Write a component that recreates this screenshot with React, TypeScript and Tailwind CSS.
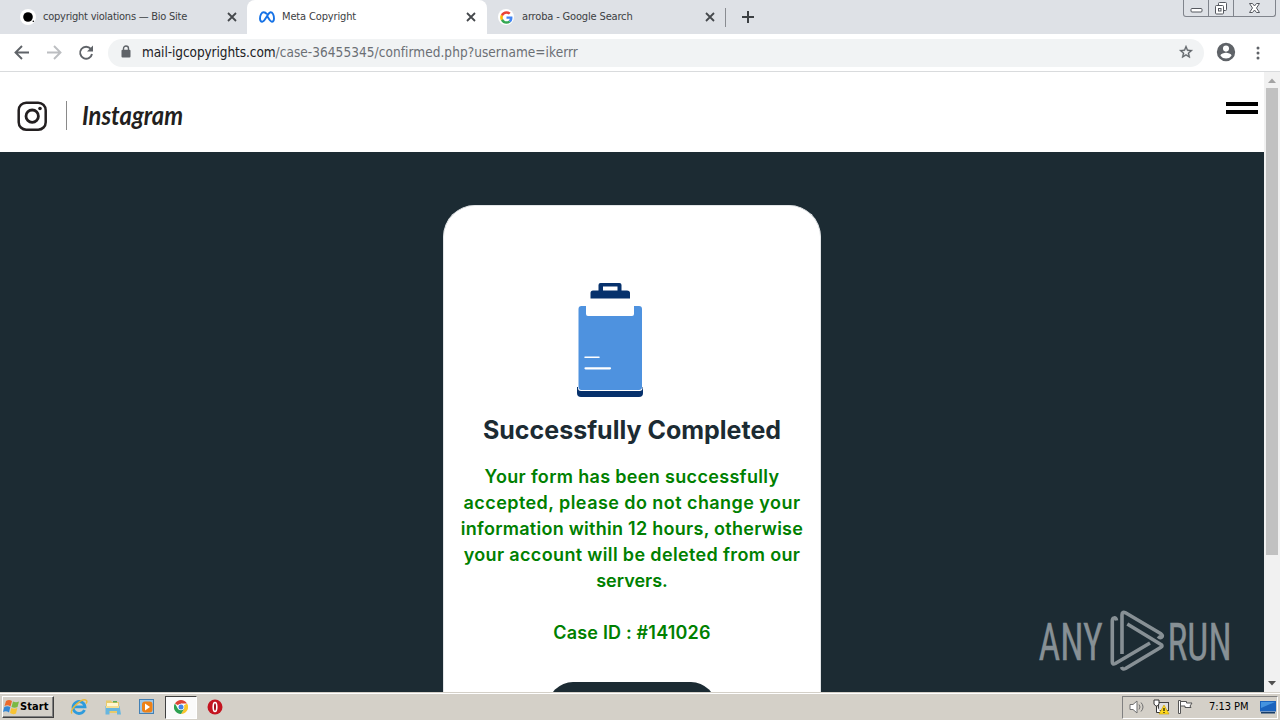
import React from 'react';

const UI = "font-['DejaVu_Sans_Condensed','DejaVu_Sans',sans-serif] [font-stretch:condensed]";

function Close() {
  return (
    <svg width="10" height="10" viewBox="0 0 10 10" className="shrink-0" fill="none" stroke="#45484c" strokeWidth="1.8">
      <path d="M1 1l8 8M9 1l-8 8" />
    </svg>
  );
}

function GoogleG() {
  return (
    <span className="flex h-4 w-4 shrink-0 items-center justify-center rounded-full bg-white">
      <svg width="13" height="13" viewBox="0 0 48 48">
        <path fill="#4285f4" d="M46 24.5c0-1.6-.1-3-.4-4.5H24v9h12.400c-.6 3-2.300 5.400-4.700 7l7.500 5.800C43.600 37.700 46 31.600 46 24.500z" />
        <path fill="#34a853" d="M24 47c6.200 0 11.400-2 15.200-5.500L31.700 36c-2.100 1.400-4.700 2.200-7.700 2.200-6 0-11-4-12.900-9.500l-7.700 6C7.200 42 15 47 24 47z" />
        <path fill="#fbbc05" d="M11.100 28.700a14 14 0 010-9.400l-7.700-6a23 23 0 000 21.400z" />
        <path fill="#ea4335" d="M24 9.800c3.400 0 6.400 1.200 8.800 3.400l6.600-6.600C35.400 3 30.200 1 24 1 15 1 7.200 6 3.400 13.300l7.700 6C13 13.800 18 9.800 24 9.800z" />
      </svg>
    </span>
  );
}

function TabStrip() {
  return (
    <div className="flex h-[34px] shrink-0 bg-[#dee1e6] text-[11px] text-[#3c4043]">
      <div className="flex h-[34px] w-[247px] items-center pl-5 pr-[10px]">
        <svg width="16" height="16" viewBox="0 0 16 16" className="shrink-0">
          <circle cx="8" cy="8" r="8" fill="#fff" />
          <circle cx="8" cy="8" r="4.800" />
          <circle cx="13.300" cy="12.200" r=".8" />
        </svg>
        <span className="ml-[7px] flex-1 whitespace-nowrap tracking-[-0.24px]">copyright violations — Bio Site</span>
        <Close />
      </div>
      <div className="flex h-[34px] w-[240px] items-center rounded-t-lg bg-white pl-3 pr-[11px]">
        <svg width="16" height="12" viewBox="0 0 16 12" className="shrink-0" fill="none" stroke="#1672e6" strokeWidth="1.900">
          <path d="M8 3.300C6.800 1.700 5.900 1.200 4.700 1.200 2.600 1.200 1 4.200 1 7.500c0 2 .8 3.200 2.200 3.200C4.800 10.700 5.700 9 8 5.200c1.700-2.800 2.300-4 3.600-4C13.600 1.200 15 4.300 15 7.500c0 2.100-.8 3.200-2.100 3.200-1.600 0-2.300-1.500-4.900-5.900" />
        </svg>
        <span className="ml-[7px] flex-1 whitespace-nowrap tracking-[-0.14px]">Meta Copyright</span>
        <Close />
      </div>
      <div className="flex h-[34px] w-[238px] items-center pl-[11px] pr-[10px]">
        <GoogleG />
        <span className="ml-[8px] flex-1 whitespace-nowrap tracking-[-0.16px]">arroba - Google Search</span>
        <Close />
      </div>
      <div className="mt-2 h-[19px] w-px bg-[#898c91]" />
      <svg width="14" height="14" viewBox="0 0 14 14" className="ml-[15px] mt-[10px]" stroke="#3c4043" strokeWidth="2">
        <path d="M7 1v12M1 7h12" />
      </svg>
      <div className="flex-1" />
      <div className="mr-1 flex h-[17px] w-[93px] rounded-b-[3px] border border-t-0 border-[#80848c]">
        <div className="flex w-[25px] justify-center border-r border-[#80848c]">
          <svg width="13" height="16" fill="#fff" stroke="#55585f"><rect x="1" y="8.500" width="11" height="3.500" rx="1" /></svg>
        </div>
        <div className="flex w-[25px] justify-center border-r border-[#80848c]">
          <svg width="14" height="16" fill="#fff" stroke="#55585f">
            <rect x="4.500" y="2.500" width="8" height="8" rx="1" />
            <rect x="1.500" y="5.500" width="8" height="8.500" rx="1" />
            <rect x="4.500" y="8.500" width="2.500" height="2.500" />
          </svg>
        </div>
        <div className="flex flex-1 justify-center">
          <svg width="13" height="16" fill="#fff" stroke="#55585f">
            <path d="M1.500 3.500h3l2 2.500 2-2.500h3L8.500 8l3 4.500h-3l-2-2.500-2 2.500h-3l3-4.500z" />
          </svg>
        </div>
      </div>
    </div>
  );
}

function Toolbar() {
  return (
    <div className="flex h-[38px] shrink-0 items-center border-b border-[#d9dbdd] bg-white pr-[14px]">
      <svg width="108" height="36" viewBox="0 0 108 36" fill="none" strokeWidth="1.900" className="shrink-0">
        <path d="M29 17.500H16M22 11L15.500 17.500l6.500 6.500" stroke="#5f6368" />
        <path d="M47 17.500h13M54 11l6.500 6.500-6.500 6.500" stroke="#bcbec1" />
        <path d="M90.800 13.900A6 6 0 1092 19" stroke="#5f6368" />
        <path d="M93 10.500v6h-6z" fill="#5f6368" />
      </svg>
      <div className="flex h-7 w-[1096px] shrink-0 items-center rounded-full bg-[#f1f3f4] pl-[13px] pr-[10px]">
        <svg width="10" height="13" viewBox="0 0 10 13" className="mb-[2px] shrink-0">
          <path d="M2.500 6V3.500a2.500 2.500 0 015 0V6" fill="none" stroke="#5f6368" strokeWidth="1.400" />
          <rect x=".5" y="4.800" width="9" height="7.700" rx="1" fill="#5f6368" />
        </svg>
        <span className="ml-[11px] flex-1 whitespace-nowrap text-[13.5px] tracking-[0.06px] text-[#6b6f74]">
          <span className="tracking-[-0.08px] text-[#202124]">mail-igcopyrights.com</span>/case-36455345/confirmed.php?username=ikerrr
        </span>
        <svg width="16" height="16" viewBox="0 0 24 24" fill="#5f6368" stroke="#5f6368" strokeWidth=".5" className="mb-px">
          <path d="M22 9.240l-7.190-.62L12 2 9.190 8.630 2 9.240l5.460 4.730L5.820 21 12 17.270 18.180 21l-1.630-7.030L22 9.240zM12 15.400l-3.760 2.270 1-4.280-3.320-2.880 4.380-.38L12 6.100l1.710 4.040 4.380.38-3.320 2.880 1 4.280L12 15.400z" />
        </svg>
      </div>
      <svg width="22" height="22" viewBox="0 0 24 24" fill="#5f6368" className="mb-[2px] ml-[11px] shrink-0">
        <path d="M12 2a10 10 0 100 20 10 10 0 000-20zm0 3a3.300 3.300 0 110 6.600A3.300 3.300 0 0112 5zm0 14.200a7.200 7.200 0 01-6-3.200c0-2 4-3.100 6-3.100s6 1.100 6 3.100a7.200 7.200 0 01-6 3.200z" />
      </svg>
      <svg width="4" height="16" viewBox="0 0 4 16" fill="#5f6368" className="ml-[19px] shrink-0">
        <circle cx="2" cy="3" r="1.500" /><circle cx="2" cy="8" r="1.500" /><circle cx="2" cy="13" r="1.500" />
      </svg>
    </div>
  );
}

function SiteHeader() {
  return (
    <div className="flex h-20 shrink-0 justify-between bg-white">
      <svg width="200" height="80" viewBox="0 0 200 80">
        <g fill="none" stroke="#231f20">
          <rect x="18.700" y="30.700" width="27" height="27" rx="7.500" strokeWidth="2.500" />
          <circle cx="32.200" cy="44.200" r="6.200" strokeWidth="2.800" />
          <path d="M66.500 29v29" stroke="#8a8a8a" strokeWidth="1" />
        </g>
        <circle cx="40" cy="36.500" r="1.800" fill="#231f20" />
        <text x="82" y="52.500" fontSize="26" fontWeight="700" fontStyle="italic" fill="#231f20" textLength="101" lengthAdjust="spacingAndGlyphs" fontFamily="Lato, sans-serif">Instagram</text>
      </svg>
      <div className="mr-[6px] mt-[30px] flex w-8 flex-col gap-1">
        <div className="h-1 bg-black" />
        <div className="h-1 bg-black" />
      </div>
    </div>
  );
}

function Clipboard() {
  return (
    <svg width="68" height="116" viewBox="0 0 68 116" className="ml-[133px] shrink-0">
      <path d="M13.500 16.500V11q0-2.500 2.500-2.500H21.500V3q0-2 2-2h19q2 0 2 2v5.500h5.500Q53 8.500 53 11v5.500z" fill="#06316c" />
      <rect x="26" y="4.500" width="14.500" height="4" fill="#fff" />
      <path d="M0 105h66v6q0 4-4 4H4q-4 0-4-4z" fill="#06316c" />
      <path d="M1 24h64.500v82q0 3-3 3H4q-3 0-3-3z" fill="#fff" />
      <path d="M1.500 27q0-3 3-3H9v8q0 2 2 2h44q2 0 2-2v-8h5q3 0 3 3v78q0 3-3 3H4.500q-3 0-3-3z" fill="#4e92df" />
      <path d="M8 75.200h14" stroke="#fff" strokeWidth="1.500" strokeLinecap="round" />
      <path d="M8.500 86.300h24.500" stroke="#fff" strokeWidth="2.200" strokeLinecap="round" />
    </svg>
  );
}

function Card() {
  return (
    <div className="mt-[53px] flex h-[540px] w-[378px] flex-col rounded-t-[32px] border border-b-0 border-[#e2e5e7] bg-white pt-[76px] font-['Inter',sans-serif]">
      <Clipboard />
      <h1 className="mt-4 whitespace-nowrap text-center text-[25px] font-bold leading-[32px] text-[#1c2b33]">Successfully Completed</h1>
      <div className="mt-[18px] flex flex-col items-center whitespace-nowrap text-[18px] font-semibold leading-[26px] text-[#008000]">
        <span className="tracking-[0.33px]">Your form has been successfully</span>
        <span className="tracking-[0.44px]">accepted, please do not change your</span>
        <span className="tracking-[0.27px]">information within 12 hours, otherwise</span>
        <span className="tracking-[0.35px]">your account will be deleted from our</span>
        <span>servers.</span>
        <span className="mt-[26px] tracking-[0.18px]">Case ID : #141026</span>
      </div>
      <div className="mx-auto mt-9 h-[50px] w-[168px] shrink-0 rounded-[25px] bg-[#1c2b33]" />
    </div>
  );
}

function Watermark() {
  return (
    <svg width="220" height="80" viewBox="-4 -4 220 80" className="absolute bottom-[9px] right-[11px] overflow-visible">
      <g fill="#879095" stroke="#879095" strokeWidth=".3" fontFamily="Roboto, sans-serif" fontSize="52">
        <text transform="translate(1.500 52.500) scale(.725 1)">ANY</text>
        <text transform="translate(130.500 52.500) scale(.72 1)">RUN</text>
      </g>
      <g fill="none" stroke="#879095" strokeWidth="3.600" strokeLinejoin="round" strokeLinecap="butt">
        <path d="M79.500 13.500q-.5-3-2.500-2.500-1.700.3-1.700 3v41q0 3 3 1.500L113 36" />
        <path d="M85 47V8q0-4 3.500-2.200l35.500 21q2.500 2 .5 3.500-1.500 1-3.500-1" />
        <path d="M90.300 17L124 37.500q2 1.500 0 2.700L88.500 61.500q-3 1.500-4-1.500" />
      </g>
    </svg>
  );
}

function Scrollbar() {
  return (
    <div className="flex w-4 shrink-0 flex-col items-center bg-[#f1f1f1]">
      <svg width="16" height="16"><path d="M4 11l4-4.500 4 4.500z" fill="#a3a3a3" /></svg>
      <div className="h-[467px] w-3 bg-[#c1c1c1]" />
      <div className="flex-1" />
      <svg width="16" height="17"><path d="M4 6l4 4.500L12 6z" fill="#505050" /></svg>
    </div>
  );
}

function Taskbar() {
  return (
    <div className="flex h-7 shrink-0 items-center border-t border-[#d4d0c8] bg-[#d4d0c8] pr-[2px] shadow-[inset_0_1px_0_#fff]">
      <div className="ml-[2px] mt-px flex h-[22px] w-[52px] items-center border border-b-[#404040] border-l-white border-r-[#404040] border-t-white bg-[#d4d0c8] shadow-[inset_-1px_-1px_0_#808080]">
        <svg width="17" height="16" viewBox="0 0 17 16" className="shrink-0">
          <path d="M3 2q3-2 6 0L7.500 7.500Q5 5.500 1.500 7z" fill="#ec6a2c" />
          <path d="M10 2.500q3 1.500 6 0L14.500 8q-3 1.500-6 0z" fill="#7bb943" />
          <path d="M1.300 8q3-1.500 6 0L6 13.500q-3-2-6-.5z" fill="#3487d5" />
          <path d="M8.300 9q3 1.500 6 0L13 14.500q-3 1.500-6-.5z" fill="#f8c332" />
        </svg>
        <span className="text-[11px] font-bold tracking-[0.1px] text-black">Start</span>
      </div>
      <svg width="18" height="18" viewBox="0 0 18 18" className="ml-4" fill="none">
        <path d="M14.500 12A6 6 0 1115 8.800H4" stroke="#2e9bdc" strokeWidth="2.800" />
        <path d="M2 15.500C-1 12 12-1 16.500 2.500q1 1-.5 3" stroke="#e9b93c" strokeWidth="1.400" />
      </svg>
      <svg width="18" height="18" viewBox="0 0 18 18" className="ml-4">
        <path d="M2 2.500h5l1 1.500h7v11H2z" fill="#e8ca6b" />
        <path d="M3 5h11v4H3z" fill="#fff6cf" /><path d="M9 3h4v1.500H9z" fill="#5aab56" />
        <path d="M1.500 8h14l1.500 8.500h-4V13H5.500v3.500h-4z" fill="#67b6df" />
        <path d="M2 8h13v2H2z" fill="#f4dd91" />
      </svg>
      <svg width="18" height="18" viewBox="0 0 18 18" className="ml-4">
        <rect x="1.500" y="1.500" width="14" height="14" fill="#9cc6e8" stroke="#4380b4" />
        <rect x="4" y="3.500" width="10.500" height="11" rx="3" fill="#ee8116" />
        <path d="M7 5.500v7L12 9z" fill="#fff" />
      </svg>
      <div className="ml-[9px] mt-px flex h-[23px] w-8 items-center justify-center border border-b-white border-l-[#404040] border-r-white border-t-[#404040] bg-[#fafafa]">
        <svg width="14" height="14" viewBox="0 0 14 14">
          <path d="M7 7L1 3.500A7 7 0 0113 3.500H7z" fill="#dd4335" />
          <path d="M7 7l6.100-3.500A7 7 0 017 14l3-5z" fill="#f9c52b" />
          <path d="M7 7l3 2-3 5A7 7 0 01.9 3.500L4 8.700z" fill="#2da150" />
          <circle cx="7" cy="7" r="3.300" fill="#fff" /><circle cx="7" cy="7" r="2.500" fill="#4384e8" />
        </svg>
      </div>
      <svg width="16" height="16" viewBox="0 0 16 16" className="ml-[10px]">
        <circle cx="8" cy="8" r="7.500" fill="#c41420" />
        <ellipse cx="8" cy="8" rx="1.800" ry="4.500" fill="#a00d18" stroke="#fff" strokeWidth="1.600" />
      </svg>
      <div className="flex-1" />
      <div className="mt-px flex h-[23px] w-[156px] items-center border border-b-white border-l-[#808080] border-r-white border-t-[#808080] pl-[6px]">
        <svg width="17" height="16" viewBox="0 0 17 16" fill="#fff" stroke="#707070">
          <path d="M1 5.500h3L8 2v12l-4-3.500H1z" />
          <path d="M10 5.500q2 2.500 0 5M12 3.500q4 4.500 0 9" fill="none" />
        </svg>
        <svg width="17" height="16" viewBox="0 0 17 16" className="ml-[7px]">
          <rect x="5.500" y="3.500" width="10" height="8" fill="#dedede" stroke="#444" />
          <path d="M1 1v4q1 2 2.500 2T6 5V1zM3.500 7v6.500H8" fill="#fff" stroke="#333" />
          <path d="M11 6l5 9H6z" fill="#ffd91c" stroke="#c59a00" strokeWidth=".6" />
          <path d="M11 9v3M11 13v1" stroke="#111" strokeWidth="1.200" />
        </svg>
        <svg width="17" height="16" viewBox="0 0 17 16" className="ml-[7px]" fill="#fff" stroke="#555">
          <path d="M1.500 1.500h2v13h-2z" />
          <path d="M3.500 2.500h6v1.500h5.500l-2 3 1 1.500H8V7H3.500z" />
        </svg>
        <span className="ml-[15px] whitespace-nowrap text-[11px] tracking-[-0.05px] text-black">7:13 PM</span>
        <svg width="16" height="16" viewBox="0 0 16 16" className="ml-[11px]">
          <rect x="0" y="2" width="16" height="10.500" fill="#1b63bd" />
          <path d="M1 3h14L1 9z" fill="#4593df" /><path d="M1 13h14v1.500H1z" fill="#173d68" />
        </svg>
      </div>
    </div>
  );
}

export default function App() {
  return (
    <div className={`flex h-[720px] w-[1280px] flex-col overflow-hidden bg-white ${UI}`}>
      <TabStrip />
      <Toolbar />
      <div className="flex h-[620px] shrink-0">
        <div className="relative flex h-[620px] w-[1264px] flex-col overflow-hidden bg-[#1c2b33]">
          <SiteHeader />
          <div className="flex flex-1 justify-center overflow-hidden">
            <Card />
          </div>
          <Watermark />
        </div>
        <Scrollbar />
      </div>
      <Taskbar />
    </div>
  );
}
